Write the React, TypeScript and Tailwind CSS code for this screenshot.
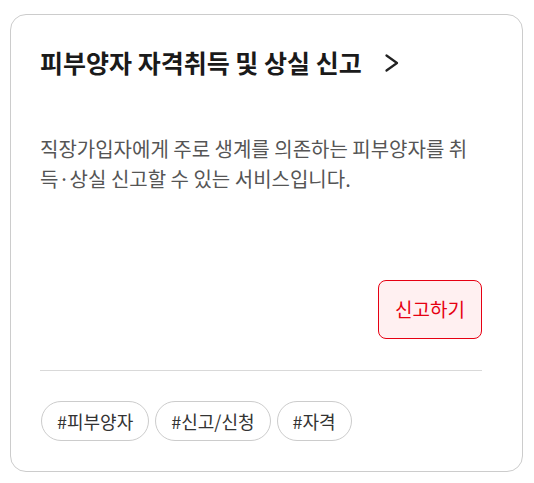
const tags = ['#피부양자', '#신고/신청', '#자격'];

export default function App() {
  return (
    <div className="w-[534px] h-[483px] bg-white pt-[14px] pl-[10px] font-['Noto_Sans_CJK_KR',sans-serif]">
      <div className="w-[513px] h-[458px] border border-[#cccccc] rounded-[16px] pl-[29px] pr-[40px] flex flex-col">
        <div className="flex items-center gap-[23px] mt-[30px] h-[36px]">
          <h2 className="text-[25px] font-bold text-[#1a1a1a]">피부양자 자격취득 및 상실 신고</h2>
          <svg width="14" height="18" viewBox="0 0 14 18" fill="none" className="text-[#222]">
            <path d="M1.5 1.5 L12 9 L1.5 16.5" stroke="currentColor" strokeWidth="2.2" strokeLinecap="round" strokeLinejoin="round" />
          </svg>
        </div>
        <p className="mt-[53px] text-[20px] leading-[30px] text-[#555555]">
          직장가입자에게 주로 생계를 의존하는 피부양자를 취득·상실 신고할 수 있는 서비스입니다.
        </p>
        <div className="flex justify-end mt-[86px]">
          <button className="w-[104px] h-[59px] rounded-[8px] border border-[#e60012] bg-[#fff0f1] text-[19px] text-[#e60012]">
            신고하기
          </button>
        </div>
        <div className="mt-[31px] border-t border-[#d9d9d9]" />
        <div className="flex gap-[6px] mt-[30px] pl-[1px]">
          {tags.map(t => (
            <span key={t} className="h-[40px] px-[15px] flex items-center rounded-full border border-[#cccccc] text-[18px] text-[#333]">
              {t}
            </span>
          ))}
        </div>
      </div>
    </div>
  );
}
